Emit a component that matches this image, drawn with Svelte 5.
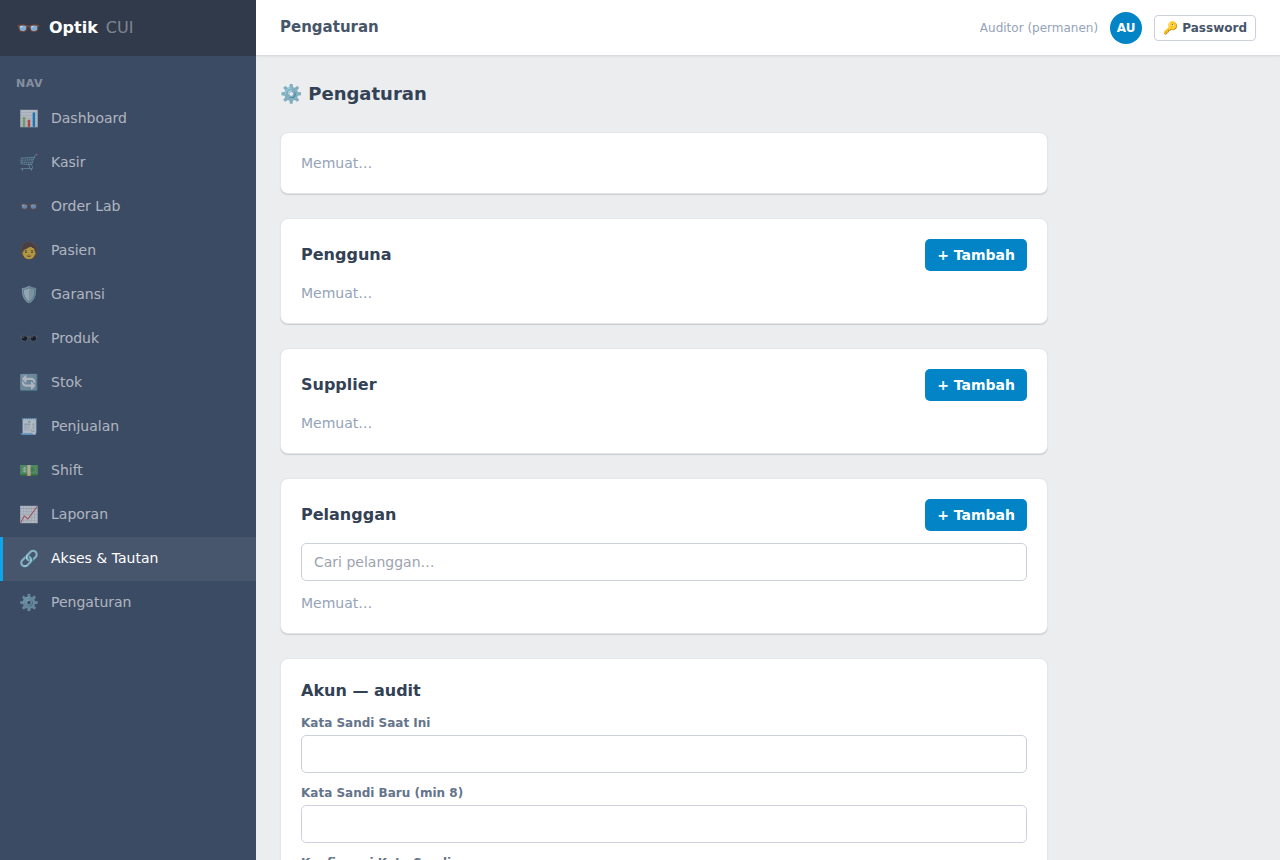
<script lang="ts">
	type NavItem = {
		icon: string;
		label: string;
		href: string;
	};

	const navItems: NavItem[] = [
		{ icon: '📊', label: 'Dashboard', href: '#dashboard' },
		{ icon: '🛒', label: 'Kasir', href: '#kasir' },
		{ icon: '👓', label: 'Order Lab', href: '#order-lab' },
		{ icon: '🧑', label: 'Pasien', href: '#pasien' },
		{ icon: '🛡️', label: 'Garansi', href: '#garansi' },
		{ icon: '🕶️', label: 'Produk', href: '#produk' },
		{ icon: '🔄', label: 'Stok', href: '#stok' },
		{ icon: '🧾', label: 'Penjualan', href: '#penjualan' },
		{ icon: '💵', label: 'Shift', href: '#shift' },
		{ icon: '📈', label: 'Laporan', href: '#laporan' },
		{ icon: '🔗', label: 'Akses & Tautan', href: '#akses' },
		{ icon: '⚙️', label: 'Pengaturan', href: '#pengaturan' }
	];

	let active = $state('#akses');
	let search = $state('');
	let passwords = $state({ current: '', next: '', confirm: '' });
</script>

<div class="app">
	<aside class="sidebar">
		<div class="brand">
			<span class="brand-icon">👓</span>
			<span class="brand-name">Optik</span>
			<span class="brand-sub">CUI</span>
		</div>
		<nav>
			<div class="nav-title">NAV</div>
			{#each navItems as item (item.href)}
				<a
					class="nav-link"
					class:active={active === item.href}
					href={item.href}
					onclick={() => (active = item.href)}
				>
					<span class="nav-icon">{item.icon}</span>
					<span>{item.label}</span>
				</a>
			{/each}
		</nav>
	</aside>

	<div class="wrapper">
		<header class="topbar">
			<div class="topbar-title">Pengaturan</div>
			<div class="user">
				<span class="user-name">Auditor (permanen)</span>
				<span class="avatar">AU</span>
				<button class="btn-outline" type="button">🔑 Password</button>
			</div>
		</header>

		<main>
			<div class="content">
				<h1>⚙️ Pengaturan</h1>

				<section class="card">
					<p class="muted">Memuat…</p>
				</section>

				{#each ['Pengguna', 'Supplier'] as title}
					<section class="card">
						<div class="card-head">
							<h2>{title}</h2>
							<button class="btn" type="button">+ Tambah</button>
						</div>
						<p class="muted">Memuat…</p>
					</section>
				{/each}

				<section class="card">
					<div class="card-head">
						<h2>Pelanggan</h2>
						<button class="btn" type="button">+ Tambah</button>
					</div>
					<input
						type="search"
						placeholder="Cari pelanggan…"
						aria-label="Cari pelanggan"
						bind:value={search}
					/>
					<p class="muted">Memuat…</p>
				</section>

				<section class="card">
					<h2>Akun — audit</h2>
					<div class="field">
						<label for="pw-current">Kata Sandi Saat Ini</label>
						<input id="pw-current" type="password" bind:value={passwords.current} />
					</div>
					<div class="field">
						<label for="pw-next">Kata Sandi Baru (min 8)</label>
						<input id="pw-next" type="password" bind:value={passwords.next} />
					</div>
					<div class="field">
						<label for="pw-confirm">Konfirmasi Kata Sandi</label>
						<input id="pw-confirm" type="password" bind:value={passwords.confirm} />
					</div>
				</section>
			</div>
		</main>
	</div>
</div>

<style>
	:global(body) {
		margin: 0;
	}

	.app {
		display: flex;
		height: 100vh;
		background: #ebedef;
		color: #334155;
		font-family: 'DejaVu Sans', sans-serif;
		font-size: 14px;
		line-height: 20px;
	}

	.app * {
		box-sizing: border-box;
	}

	.sidebar {
		display: flex;
		flex-direction: column;
		flex: 0 0 256px;
		background: #3c4b64;
	}

	.brand {
		display: flex;
		align-items: center;
		gap: 8px;
		height: 56px;
		padding: 0 16px;
		background: #303a4b;
		font-size: 16px;
	}

	.brand-icon {
		font-size: 20px;
	}

	.brand-name {
		color: #fff;
		font-weight: 700;
	}

	.brand-sub {
		color: rgba(255, 255, 255, 0.4);
	}

	nav {
		padding-top: 8px;
	}

	.nav-title {
		padding: 12px 16px 5px;
		color: rgba(255, 255, 255, 0.4);
		font-size: 11px;
		font-weight: 700;
		line-height: 16px;
		letter-spacing: 0.05em;
	}

	.nav-link {
		display: flex;
		align-items: center;
		gap: 12px;
		height: 44px;
		padding: 0 16px 2px;
		border-left: 3px solid transparent;
		color: rgba(255, 255, 255, 0.6);
		line-height: 19px;
		text-decoration: none;
	}

	.nav-link.active {
		border-left-color: #0ea5e9;
		background: rgba(255, 255, 255, 0.06);
		color: #fff;
	}

	.nav-icon {
		width: 20px;
		font-size: 16px;
		text-align: center;
	}

	.wrapper {
		display: flex;
		flex: 1;
		flex-direction: column;
		min-width: 0;
	}

	.topbar {
		display: flex;
		align-items: center;
		justify-content: space-between;
		flex: 0 0 56px;
		padding: 0 24px;
		background: #fff;
		border-bottom: 1px solid #d8dbe0;
		box-shadow: 0 1px 2px rgba(0, 0, 0, 0.05);
	}

	.topbar-title {
		padding-bottom: 2px;
		color: #475569;
		font-size: 15px;
		font-weight: 700;
		line-height: 22px;
	}

	.user {
		display: flex;
		align-items: center;
		gap: 12px;
		font-size: 12px;
	}

	.user-name {
		color: #94a3b8;
	}

	.avatar {
		display: flex;
		align-items: center;
		justify-content: center;
		width: 32px;
		height: 32px;
		border-radius: 50%;
		background: #0284c7;
		color: #fff;
		font-weight: 700;
	}

	button {
		font-family: inherit;
		font-weight: 700;
		cursor: pointer;
	}

	.btn-outline {
		padding: 4px 8px;
		border: 1px solid #cbd0db;
		border-radius: 4px;
		background: #fff;
		color: #475569;
		font-size: 12px;
		line-height: 16px;
	}

	.btn {
		padding: 6px 12px;
		border: 0;
		border-radius: 5px;
		background: #0284c7;
		color: #fff;
		font-size: 14px;
		line-height: 20px;
	}

	.btn:hover {
		background: #0369a1;
	}

	main {
		flex: 1;
		overflow-y: auto;
		padding: 24px;
		scrollbar-width: none;
	}

	.content {
		display: flex;
		flex-direction: column;
		gap: 24px;
		max-width: 768px;
	}

	h1,
	h2,
	p {
		margin: 0;
	}

	h1 {
		font-size: 18px;
		line-height: 28px;
	}

	h2 {
		font-size: 16px;
		line-height: 24px;
	}

	.card {
		display: flex;
		flex-direction: column;
		gap: 12px;
		padding: 20px;
		border: 1px solid #e4e6ea;
		border-radius: 8px;
		background: #fff;
		box-shadow: 0 1px 1px rgba(0, 0, 0, 0.14);
	}

	.card-head {
		display: flex;
		align-items: center;
		justify-content: space-between;
	}

	.muted {
		color: #94a3b8;
	}

	.field {
		display: flex;
		flex-direction: column;
		gap: 4px;
	}

	label {
		color: #64748b;
		font-size: 12px;
		font-weight: 700;
		line-height: 16px;
	}

	input {
		width: 100%;
		height: 38px;
		padding: 8px 12px;
		border: 1px solid #cbd0db;
		border-radius: 5px;
		background: #fff;
		color: inherit;
		font: inherit;
		appearance: none;
	}

	input::placeholder {
		color: #9ca3af;
	}

	input:focus {
		outline: 2px solid #0ea5e9;
		outline-offset: -1px;
	}
</style>
